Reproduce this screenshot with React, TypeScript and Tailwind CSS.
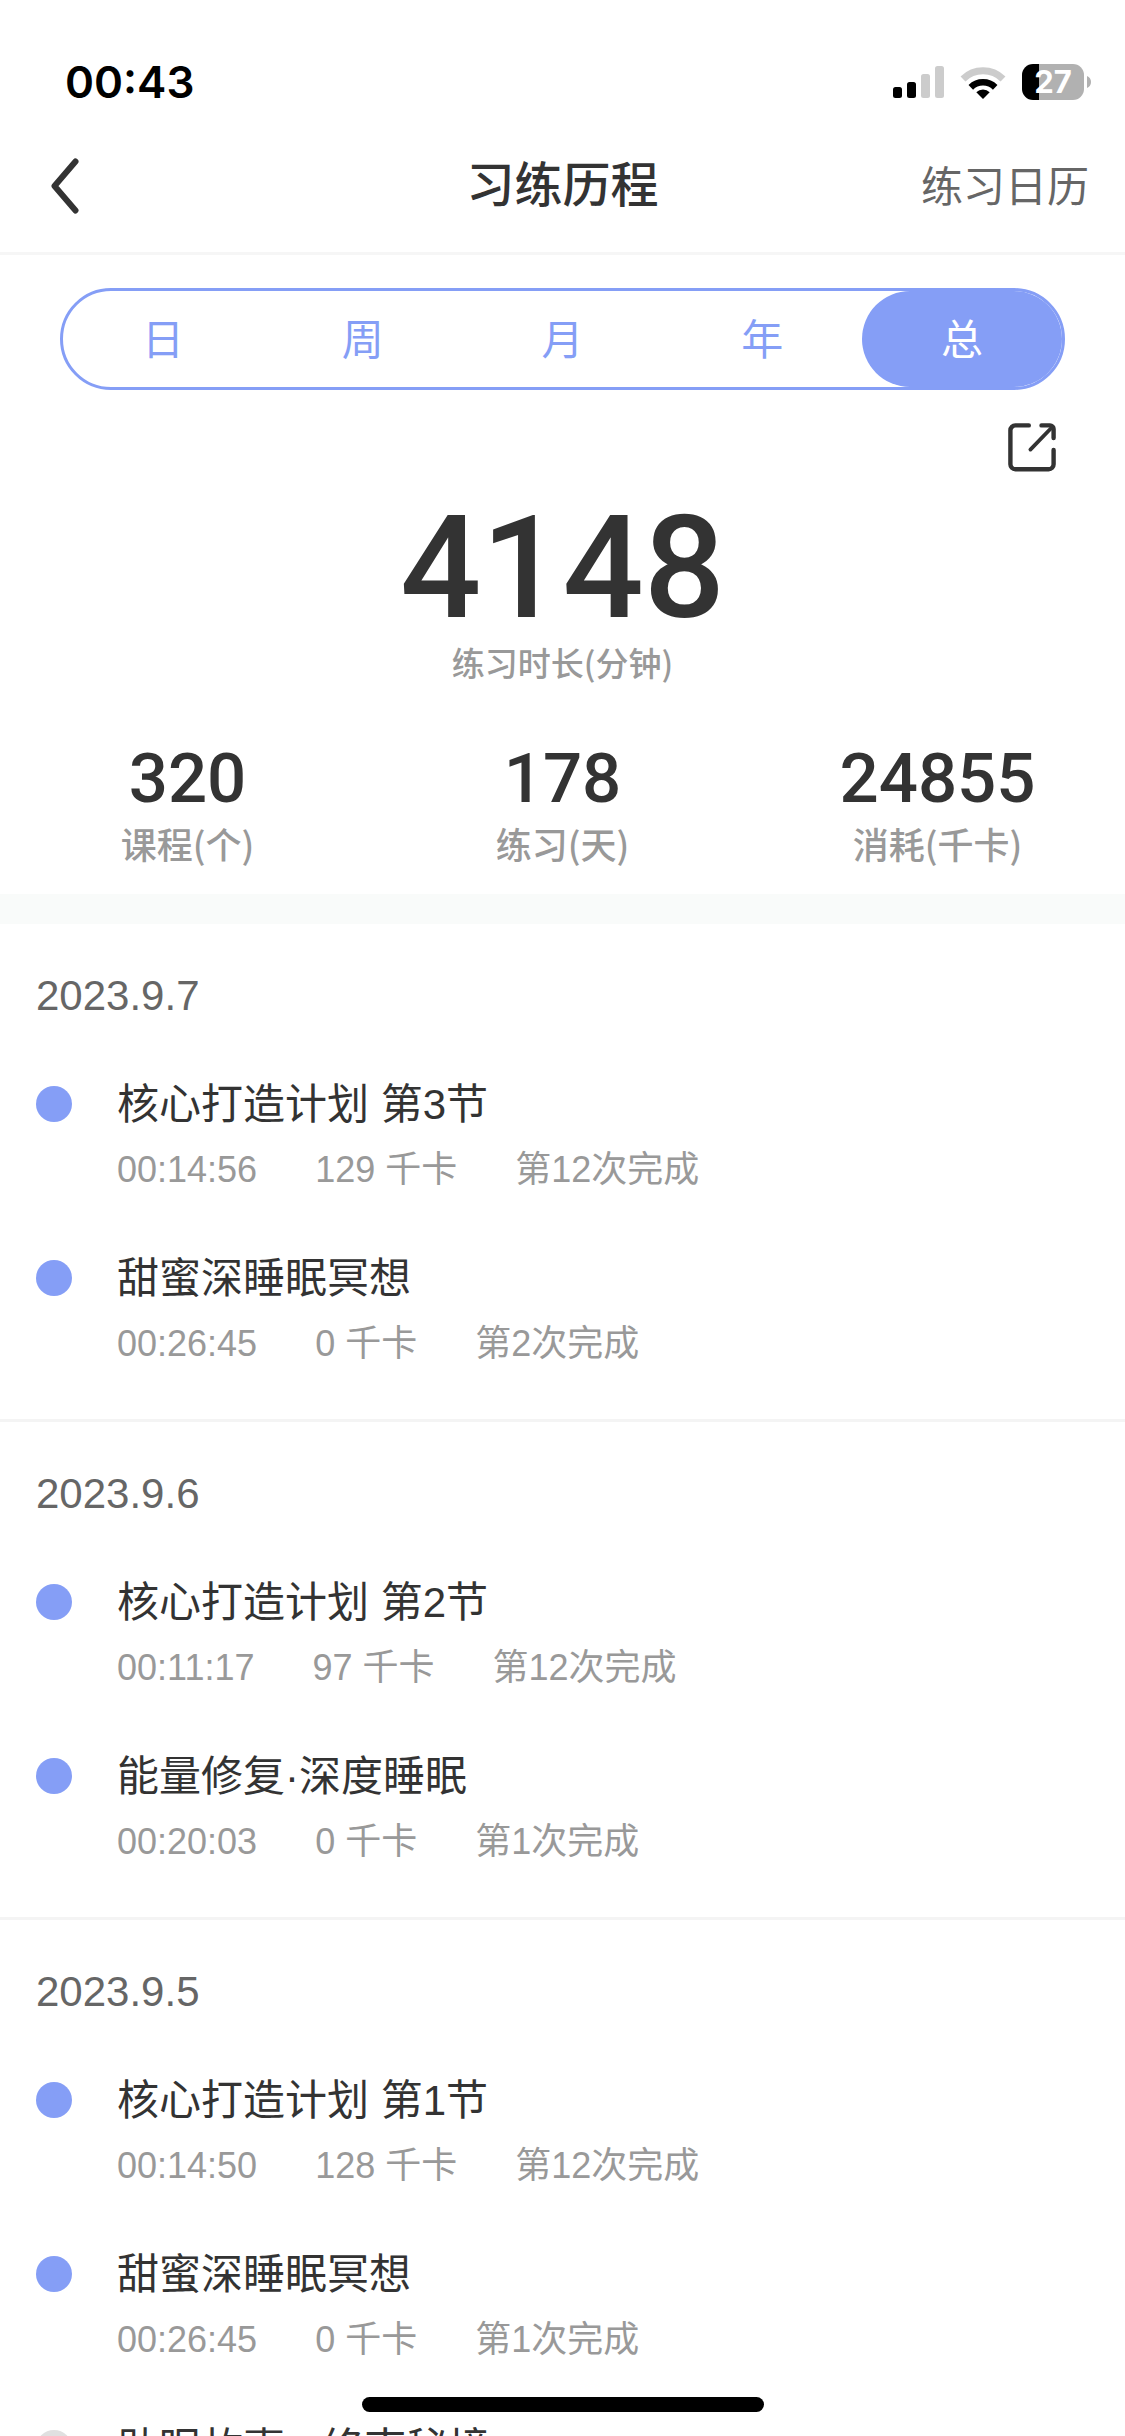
import { useState } from "react";

type Session = {
  title: string;
  done: boolean;
  meta: string[];
};

type Day = {
  date: string;
  sessions: Session[];
};

const ranges = ["日", "周", "月", "年", "总"];

const stats = [
  { value: "320", label: "课程(个)" },
  { value: "178", label: "练习(天)" },
  { value: "24855", label: "消耗(千卡)" },
];

const days: Day[] = [
  {
    date: "2023.9.7",
    sessions: [
      { title: "核心打造计划 第3节", done: true, meta: ["00:14:56", "129 千卡", "第12次完成"] },
      { title: "甜蜜深睡眠冥想", done: true, meta: ["00:26:45", "0 千卡", "第2次完成"] },
    ],
  },
  {
    date: "2023.9.6",
    sessions: [
      { title: "核心打造计划 第2节", done: true, meta: ["00:11:17", "97 千卡", "第12次完成"] },
      { title: "能量修复·深度睡眠", done: true, meta: ["00:20:03", "0 千卡", "第1次完成"] },
    ],
  },
  {
    date: "2023.9.5",
    sessions: [
      { title: "核心打造计划 第1节", done: true, meta: ["00:14:50", "128 千卡", "第12次完成"] },
      { title: "甜蜜深睡眠冥想", done: true, meta: ["00:26:45", "0 千卡", "第1次完成"] },
      { title: "助眠故事 - 终南秘境", done: false, meta: [] },
    ],
  },
];

function SignalIcon() {
  return (
    <svg width="51" height="33" viewBox="0 0 51 33" aria-hidden="true">
      <rect x="0" y="21" width="9" height="11" rx="2.5" fill="#000" />
      <rect x="14" y="16" width="9" height="16" rx="2.5" fill="#000" />
      <rect x="28" y="8" width="9" height="24" rx="2.5" fill="#ccc" />
      <rect x="42" y="0" width="9" height="32" rx="2.5" fill="#ccc" />
    </svg>
  );
}

function WifiIcon() {
  return (
    <svg width="46" height="33" viewBox="0 0 46 33" fill="none" aria-hidden="true">
      <path d="M3 13 A28.5 28.5 0 0 1 43 13" stroke="#ccc" strokeWidth="7" />
      <path d="M10.8 21.3 A17.5 17.5 0 0 1 35.2 21.3" stroke="#000" strokeWidth="6.5" />
      <path d="M16.3 26.2 A9.6 9.6 0 0 1 29.7 26.2 L23 33 Z" fill="#000" />
    </svg>
  );
}

function Battery() {
  return (
    <div className="flex items-center gap-[3px]">
      <div className="flex h-9 w-[62px] items-center justify-center rounded-[11px] bg-[linear-gradient(to_right,#000_17px,#b1b1b1_17px)] text-[31px] leading-9 font-bold text-white">
        27
      </div>
      <svg width="4" height="12" viewBox="0 0 4 12" aria-hidden="true">
        <path d="M0 0 C2.5 1 4 3 4 6 S2.5 11 0 12 Z" fill="#b1b1b1" />
      </svg>
    </div>
  );
}

function StatusBar() {
  return (
    <div className="flex h-[132px] shrink-0 items-center justify-between pt-[33px] pr-[34px] pb-[1px] pl-[65px] font-['Inter',sans-serif]">
      <span className="text-[44px] leading-[54px] font-semibold text-black">00:43</span>
      <div className="flex items-center gap-4">
        <SignalIcon />
        <WifiIcon />
        <Battery />
      </div>
    </div>
  );
}

function NavBar() {
  return (
    <header className="grid shrink-0 grid-cols-[1fr_auto_1fr] items-center border-b-[3px] border-[#f6f6f6] px-9 pb-3">
      <button type="button" aria-label="返回" className="flex h-[108px] w-14 items-center pl-[15px]">
        <svg width="28" height="56" viewBox="0 0 28 56" fill="none" aria-hidden="true">
          <path
            d="M24.5 3.5 L3.5 28 L24.5 52.5"
            stroke="#333"
            strokeWidth="6"
            strokeLinecap="round"
            strokeLinejoin="round"
          />
        </svg>
      </button>
      <h1 className="text-[48px] leading-[60px] font-medium text-[#333]">习练历程</h1>
      <a href="#calendar" className="justify-self-end pt-1 text-[42px] leading-[60px] text-[#666]">
        练习日历
      </a>
    </header>
  );
}

function RangeTabs() {
  const [active, setActive] = useState("总");
  return (
    <div
      role="tablist"
      className="mx-[60px] mt-[33px] grid h-[102px] grid-cols-5 rounded-full border-[3px] border-[#859ef6]"
    >
      {ranges.map((range) => (
        <button
          key={range}
          type="button"
          role="tab"
          aria-selected={range === active}
          onClick={() => setActive(range)}
          className={
            range === active
              ? "rounded-full bg-[#859ef6] pt-1 text-[42px] leading-[60px] text-white"
              : "rounded-full pt-1 text-[42px] leading-[60px] text-[#859ef6]"
          }
        >
          {range}
        </button>
      ))}
    </div>
  );
}

function Summary() {
  return (
    <section className="shrink-0">
      <RangeTabs />
      <div className="mt-[33px] flex justify-end pr-[69px]">
        <button type="button" aria-label="分享">
          <svg
            width="48"
            height="49"
            viewBox="0 0 48 49"
            fill="none"
            stroke="#333"
            strokeWidth="4.4"
            strokeLinecap="round"
            strokeLinejoin="round"
            aria-hidden="true"
          >
            <path d="M20.8 2.4 H7.5 A5 5 0 0 0 2.4 7.5 V41 A5 5 0 0 0 7.5 46.2 H40.5 A5 5 0 0 0 45.6 41 V27" />
            <path d="M33.5 2.4 H42 A3.6 3.6 0 0 1 45.6 6 V15" />
            <path d="M44.5 3.8 L22.4 26.6" strokeWidth="3.8" />
          </svg>
        </button>
      </div>
      <div className="mt-[23px] text-center">
        <p className="font-['Roboto',sans-serif] text-[143px] leading-[146px] font-medium text-[#333]">4148</p>
        <p className="font-['Noto_Sans_CJK_SC',sans-serif] text-[33px] leading-[42px] font-medium text-[#999]">
          练习时长(分钟)
        </p>
      </div>
      <dl className="mt-[60px] grid grid-cols-3 pb-[27px] text-center">
        {stats.map((stat) => (
          <div key={stat.label} className="flex flex-col-reverse gap-1">
            <dt className="font-['Noto_Sans_CJK_SC',sans-serif] text-[36px] leading-[48px] font-medium text-[#999]">
              {stat.label}
            </dt>
            <dd className="font-['Roboto',sans-serif] text-[69px] leading-[72px] font-medium text-[#333]">
              {stat.value}
            </dd>
          </div>
        ))}
      </dl>
    </section>
  );
}

function SessionItem({ session }: { session: Session }) {
  return (
    <li className="flex">
      <span
        className={
          session.done
            ? "mt-3 mr-[45px] size-9 shrink-0 rounded-full bg-[#859ef6]"
            : "mt-3 mr-[45px] size-9 shrink-0 rounded-full bg-[#e0e0e0]"
        }
      />
      <div>
        <h3 className="text-[42px] leading-[62px] text-[#333]">{session.title}</h3>
        {session.meta.length > 0 && (
          <p className="mt-[7px] flex gap-[58px] text-[36px] leading-[54px] text-[#999]">
            {session.meta.map((item) => (
              <span key={item}>{item}</span>
            ))}
          </p>
        )}
      </div>
    </li>
  );
}

function DaySection({ day }: { day: Day }) {
  return (
    <section className="border-b-[3px] border-[#f4f4f4] px-9 pt-[42px] pb-12">
      <h2 className="text-[42px] leading-[60px] text-[#666]">{day.date}</h2>
      <ul className="mt-12 flex flex-col gap-[51px]">
        {day.sessions.map((session) => (
          <SessionItem key={session.title} session={session} />
        ))}
      </ul>
    </section>
  );
}

export default function App() {
  return (
    <div className="flex h-screen flex-col bg-white font-['Liberation_Sans','Noto_Sans_CJK_SC',sans-serif]">
      <StatusBar />
      <NavBar />
      <main className="min-h-0 flex-1 overflow-y-auto [scrollbar-width:none]">
        <Summary />
        <div className="h-[30px] bg-[#f9fbfa]" />
        {days.map((day) => (
          <DaySection key={day.date} day={day} />
        ))}
      </main>
      <div className="fixed inset-x-0 bottom-6 mx-auto h-[15px] w-[402px] rounded-full bg-black" />
    </div>
  );
}
